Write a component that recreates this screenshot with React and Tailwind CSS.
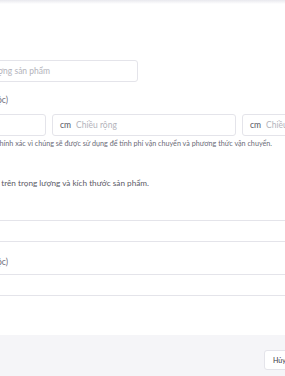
export default function App() {
  return (
    <div className="w-[285px] h-[376px] overflow-hidden bg-white flex flex-col font-['Lato','Noto_Sans',sans-serif]">
      <div className="h-[4px] shrink-0 bg-gradient-to-b from-[#e9e9ee] to-white" />
      {/* weight input */}
      <div className="mt-[56px] -ml-[138px] w-[276px] h-[22px] shrink-0 border border-[#e4e4ea] rounded-[3px] flex items-center">
        <div className="w-[187px] shrink-0 flex justify-end">
          <span className="whitespace-nowrap text-[8.5px] text-[#b3b3bb]">Nhập trọng lượng sản phẩm</span>
        </div>
      </div>
      {/* label */}
      <div className="mt-[12px] h-[12px] w-[8px] shrink-0 flex justify-end items-center">
        <span className="whitespace-nowrap text-[8.5px] text-[#6b6b78]">Kích thước (Không bắt buộc)</span>
      </div>
      {/* dimension inputs */}
      <div className="mt-[8px] -ml-[138px] w-[700px] shrink-0 flex gap-[6px]">
        {["Chiều dài", "Chiều rộng", "Chiều cao"].map((p) => (
          <div key={p} className="w-[184px] h-[22px] border border-[#e4e4ea] rounded-[3px] flex items-center pl-[7px] gap-[5px]">
            <span className="text-[8.5px] text-[#555560]">cm</span>
            <span className="text-[8.5px] text-[#b3b3bb]">{p}</span>
          </div>
        ))}
      </div>
      {/* helper */}
      <div className="mt-[3px] h-[10px] w-[272px] shrink-0 flex justify-end items-center">
        <span className="whitespace-nowrap text-[7.2px] text-[#6b6b78]">
          Vui lòng nhập kích thước chính xác vì chúng sẽ được sử dụng để tính phí vận chuyển và phương thức vận chuyển.
        </span>
      </div>
      {/* info text */}
      <div className="mt-[28px] h-[12px] w-[149px] shrink-0 flex justify-end items-center">
        <span className="whitespace-nowrap text-[8.2px] text-[#5a5a66]">
          Phí vận chuyển sẽ được tính dựa trên trọng lượng và kích thước sản phẩm.
        </span>
      </div>
      {/* full input */}
      <div className="mt-[31px] -ml-[138px] w-[600px] h-[22px] shrink-0 border border-[#e4e4ea] rounded-[3px]" />
      {/* label */}
      <div className="mt-[14px] h-[12px] w-[8px] shrink-0 flex justify-end items-center">
        <span className="whitespace-nowrap text-[8.5px] text-[#6b6b78]">Mã vạch (Không bắt buộc)</span>
      </div>
      <div className="mt-[6px] -ml-[138px] w-[600px] h-[22px] shrink-0 border border-[#e4e4ea] rounded-[3px]" />
      {/* footer */}
      <div className="mt-auto h-[41px] shrink-0 bg-[#f5f5f8] flex items-start pt-[15px] pl-[264px]">
        <div className="h-[20px] w-[60px] shrink-0 bg-white border border-[#e4e4ea] rounded-[3px] flex items-center pl-[8px]">
          <span className="text-[7px] text-[#33333d]">Hủy</span>
        </div>
      </div>
    </div>
  );
}
